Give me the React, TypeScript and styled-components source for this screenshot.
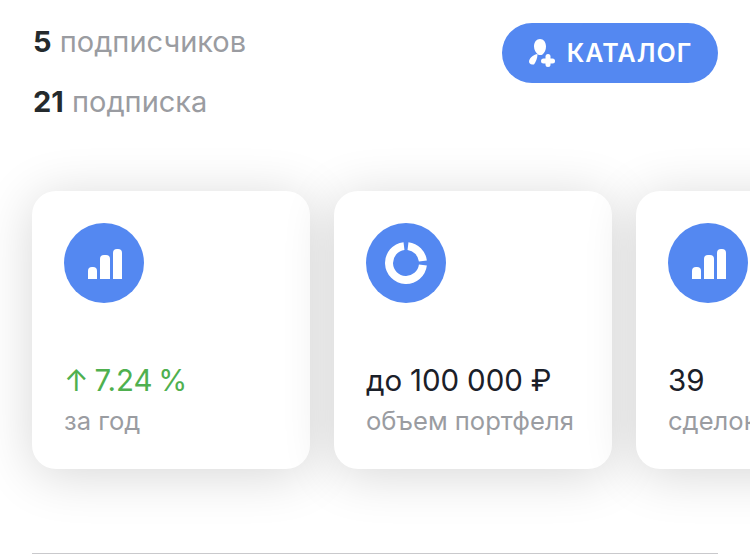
import React from 'react';
import styled, { createGlobalStyle } from 'styled-components';

const GlobalStyle = createGlobalStyle`
  html, body {
    margin: 0;
    padding: 0;
    background: #fff;
  }
  body {
    font-family: Inter, "Noto Sans", sans-serif;
  }
`;

const Page = styled.div`
  width: 750px;
  height: 557px;
  box-sizing: border-box;
  padding: 23px 32px 0;
  overflow: hidden;
  background: #fff;
`;

const Header = styled.div`
  display: flex;
  justify-content: space-between;
  align-items: flex-start;
  height: 168px;
`;

const Stats = styled.div`
  display: flex;
  flex-direction: column;
  gap: 26px;
  padding: 2px 0 0 1px;
`;

const Stat = styled.div`
  font-size: 29px;
  line-height: 34px;
  color: #9a9ca1;
`;

const StatCount = styled.b`
  font-weight: 700;
  color: #242a2d;
`;

const CatalogButton = styled.button`
  display: flex;
  align-items: center;
  justify-content: center;
  gap: 12px;
  width: 216px;
  height: 60px;
  padding: 0 0 0 1px;
  border: 0;
  border-radius: 30px;
  background: #5488f1;
  color: #fff;
  font-family: inherit;
  font-size: 25px;
  font-weight: 600;
  letter-spacing: 1px;
`;

const CardRow = styled.div`
  display: flex;
  gap: 24px;
`;

const Card = styled.div`
  flex: none;
  width: 278px;
  height: 278px;
  box-sizing: border-box;
  padding: 32px 32px 0;
  border-radius: 24px;
  background: #fff;
  box-shadow: 0 6px 52px rgba(0, 0, 0, 0.16);
`;

const IconCircle = styled.div`
  display: flex;
  align-items: center;
  justify-content: center;
  width: 80px;
  height: 80px;
  border-radius: 50%;
  background: #5488f1;
`;

const Value = styled.div<{ $accent?: boolean }>`
  margin-top: 59px;
  font-size: 29.5px;
  line-height: 36px;
  white-space: nowrap;
  word-spacing: ${(p) => (p.$accent ? '-2.5px' : '-0.5px')};
  color: ${(p) => (p.$accent ? '#4fb04f' : '#1b2029')};
`;

const Caption = styled.div`
  margin-top: 7px;
  font-size: 25.6px;
  line-height: 32px;
  white-space: nowrap;
  color: #9a9ca1;
`;

const Divider = styled.hr`
  height: 1px;
  margin: 84px 0 0;
  border: 0;
  background: #c9c9cc;
`;

const UserPlusIcon = () => (
  <svg width="26" height="28" viewBox="0 0 26 28" fill="#fff">
    <path d="M11 0c3.500 0 6 3 6 7.500 0 3.500-1.500 6.500-3.500 8-1 .8-3.500.8-4.500 0C7 14 5 11 5 7.500 5 3 7.500 0 11 0z" />
    <path d="M8.500 15c-3.500.5-7.500 3.500-8.300 6.500-.6 2.200.6 4 3 4h1.800c1.800-2.500 3.700-6.500 3.500-10.500z" />
    <rect x="12" y="19.500" width="14" height="5" rx="2.500" />
    <rect x="16.500" y="15" width="5" height="13" rx="2.500" />
  </svg>
);

const BarsIcon = () => (
  <svg width="34" height="30" viewBox="0 0 34 30" fill="#fff" style={{ marginLeft: 2, marginTop: 2 }}>
    <path d="M0 30V22a4 4 0 0 1 4-4h1a4 4 0 0 1 4 4v8z" />
    <path d="M12 30V10a4 4 0 0 1 4-4h2a4 4 0 0 1 4 4v20z" />
    <path d="M25 30V4a4 4 0 0 1 4-4h1a4 4 0 0 1 4 4v26z" />
  </svg>
);

const DonutIcon = () => (
  <svg width="42" height="42" viewBox="0 0 42 42" fill="none" stroke="#fff" strokeWidth="8">
    <path d="M23 4.100A17 17 0 0 1 37.900 19" />
    <path d="M37.900 23A17 17 0 1 1 19 4.100" />
  </svg>
);

const cards = [
  { icon: <BarsIcon />, value: '↑ 7.24 %', caption: 'за год', accent: true },
  { icon: <DonutIcon />, value: 'до 100 000 ₽', caption: 'объем портфеля' },
  { icon: <BarsIcon />, value: '39', caption: 'сделок' },
];

const App: React.FC = () => (
  <>
    <GlobalStyle />
    <Page>
      <Header>
        <Stats>
          <Stat><StatCount>5</StatCount> подписчиков</Stat>
          <Stat><StatCount>21</StatCount> подписка</Stat>
        </Stats>
        <CatalogButton>
          <UserPlusIcon />
          КАТАЛОГ
        </CatalogButton>
      </Header>
      <CardRow>
        {cards.map((card) => (
          <Card key={card.caption}>
            <IconCircle>{card.icon}</IconCircle>
            <Value $accent={card.accent}>{card.value}</Value>
            <Caption>{card.caption}</Caption>
          </Card>
        ))}
      </CardRow>
      <Divider />
    </Page>
  </>
);

export default App;
